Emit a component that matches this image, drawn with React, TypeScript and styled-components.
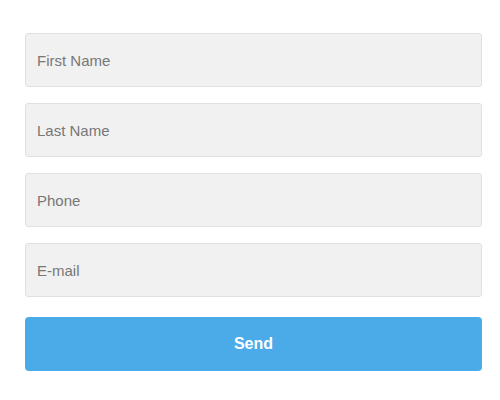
import styled, { createGlobalStyle } from "styled-components";

const GlobalStyle = createGlobalStyle`
  body {
    margin: 0;
    background: #ffffff;
    font-family: "Liberation Sans", Arial, sans-serif;
  }
`;

const Form = styled.form`
  display: flex;
  flex-direction: column;
  gap: 16px;
  width: 457px;
  padding: 33px 0 0 25px;
`;

const Input = styled.input`
  box-sizing: border-box;
  height: 54px;
  width: 100%;
  padding: 0 11px;
  border: 1px solid #e0e0e0;
  border-radius: 3px;
  background-color: #f1f1f1;
  font-family: "Liberation Sans", Arial, sans-serif;
  font-size: 15px;
  color: #555;
  outline: none;

  &::placeholder {
    color: #777;
  }
`;

const SendButton = styled.button`
  height: 54px;
  width: 100%;
  margin-top: 4px;
  border: none;
  border-radius: 4px;
  background-color: #4aabe8;
  color: #fff;
  font-family: "Liberation Sans", Arial, sans-serif;
  font-size: 16px;
  font-weight: bold;
  cursor: pointer;
`;

const App = () => {
  return (
    <>
      <GlobalStyle />
      <Form onSubmit={(e) => e.preventDefault()}>
        <Input placeholder="First Name" />
        <Input placeholder="Last Name" />
        <Input placeholder="Phone" />
        <Input placeholder="E-mail" />
        <SendButton type="submit">Send</SendButton>
      </Form>
    </>
  );
};

export default App;
